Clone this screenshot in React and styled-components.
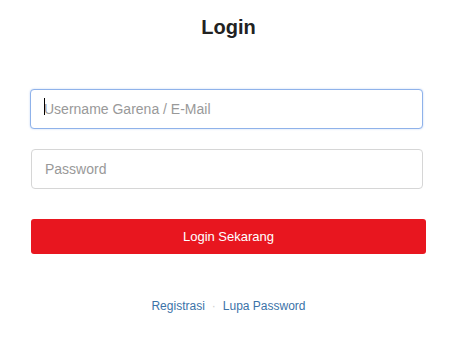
import React from 'react';
import styled, { createGlobalStyle } from 'styled-components';

const Global = createGlobalStyle`
  body {
    margin: 0;
    background: #fff;
    font-family: "Liberation Sans", Arial, sans-serif;
  }
`;

const Page = styled.div`
  padding: 16px 34px 0 30px;
`;

const Title = styled.h1`
  margin: 0;
  text-align: center;
  font-size: 20px;
  line-height: 22px;
  font-weight: bold;
  color: #222;
`;

const Form = styled.form`
  margin-top: 51px;
  display: flex;
  flex-direction: column;
`;

const FieldWrap = styled.div`
  position: relative;
  margin: 0 0 20px ${(p) => (p.shift ? '1px' : '0')};
`;

const Field = styled.input`
  display: block;
  box-sizing: border-box;
  width: ${(p) => (p.shift ? '392px' : '393px')};
  height: 40px;
  padding: 0 13px;
  border: 1px solid ${(p) => (p.focused ? '#8fb2ea' : '#d6d6d6')};
  border-radius: 4px;
  box-shadow: ${(p) => (p.focused ? '0 0 2px rgba(102, 150, 233, 0.45)' : 'none')};
  font-family: "Liberation Sans", Arial, sans-serif;
  font-size: 14px;
  color: #333;
  caret-color: #000;
  outline: none;
  &::placeholder {
    color: #999;
  }
`;

const Caret = styled.span`
  position: absolute;
  left: 14px;
  top: 9px;
  width: 1px;
  height: 17px;
  background: #000;
`;

const Submit = styled.button`
  box-sizing: border-box;
  width: 395px;
  height: 35px;
  margin: 10px 0 0 1px;
  border: none;
  border-radius: 3px;
  background: #e8161f;
  color: #fff;
  font-family: "Liberation Sans", Arial, sans-serif;
  font-size: 13px;
  cursor: pointer;
`;

const Links = styled.div`
  margin-top: 43px;
  text-align: center;
  font-size: 12px;
  line-height: 18px;
  color: #3b73a8;
`;

const Link = styled.a`
  color: #3b73a8;
  text-decoration: none;
`;

const Sep = styled.span`
  color: #d0d0d0;
  margin: 0 7px;
`;

export default function App() {
  return (
    <>
      <Global />
      <Page>
        <Title>Login</Title>
        <Form onSubmit={(e) => e.preventDefault()}>
          <FieldWrap>
            <Field focused placeholder="Username Garena / E-Mail" />
            <Caret />
          </FieldWrap>
          <FieldWrap shift>
            <Field shift type="password" placeholder="Password" />
          </FieldWrap>
          <Submit type="submit">Login Sekarang</Submit>
        </Form>
        <Links>
          <Link href="#">Registrasi</Link>
          <Sep>·</Sep>
          <Link href="#">Lupa Password</Link>
        </Links>
      </Page>
    </>
  );
}
